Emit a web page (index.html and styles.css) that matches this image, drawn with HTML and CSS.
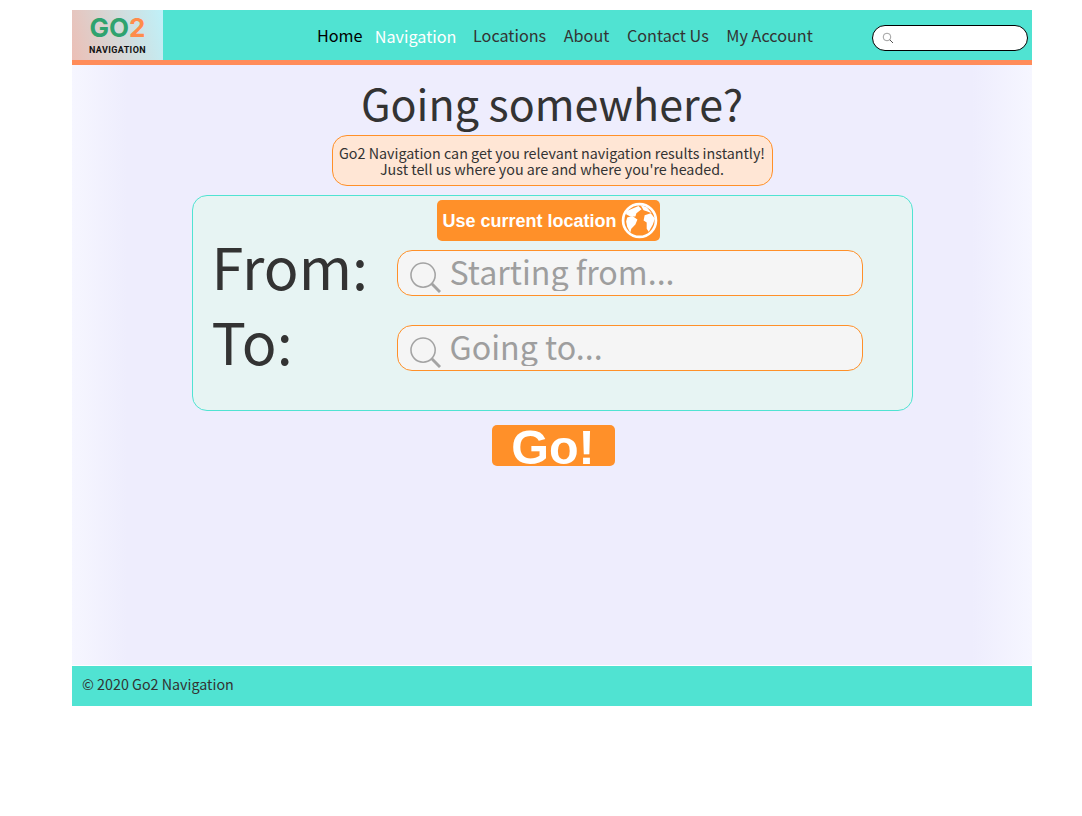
FILE: index.html

```html
<!DOCTYPE html>
<html lang="en">
    <head>
        <meta charset="UTF-8" />
        <title>Go2 Navigation</title>
        <link rel="stylesheet" href="styles.css">
    </head>
    <body>
        <div class="page">
            <header class="top">
                <div class="logo">
                    <div class="logo-name">GO<span class="logo-two">2</span></div>
                    <div class="logo-sub">NAVIGATION</div>
                </div>
                <nav class="menu">
                    <a class="home" href="#">Home</a>
                    <a class="current" href="#">Navigation</a>
                    <a href="#">Locations</a>
                    <a href="#">About</a>
                    <a href="#">Contact Us</a>
                    <a href="#">My Account</a>
                </nav>
                <div class="search">
                    <svg class="search-icon" viewBox="0 0 12 12" width="12" height="12">
                        <circle cx="5" cy="5" r="3.8" fill="none" stroke="#777" stroke-width="0.7" />
                        <path d="M7.8 7.8 L11 11" stroke="#555" stroke-width="1" fill="none" />
                    </svg>
                    <input type="text" />
                </div>
            </header>

            <main class="content">
                <h1>Going somewhere?</h1>
                <p class="intro">Go2 Navigation can get you relevant navigation results instantly!<br>Just tell us where you are and where you're headed.</p>

                <form class="route">
                    <button type="button" class="locate">
                        Use current location
                        <svg class="globe" viewBox="0 0 36 36" width="37" height="37">
                            <circle cx="18" cy="18" r="16" fill="none" stroke="#fff" stroke-width="2.6" />
                            <path fill="#fff" d="M5 9 L17 4 L20 7 L15 11 L14 14 L9 14 L5 12 Z" />
                            <path fill="#fff" d="M6 15 L11 13.5 L16 17 L14 22 L10 26 L9 30 L6 24 L5 19 Z" />
                            <path fill="#fff" d="M19 3 L25 5 L30 11 L25 9 L22 8 Z" />
                            <path fill="#fff" d="M23 13 L29 11 L33 16 L31 22 L27 29 L25 26 L25 20 L22 18 Z" />
                        </svg>
                    </button>
                    <div class="row">
                        <label class="row-label">From:</label>
                        <div class="field">
                            <svg class="field-icon" viewBox="0 0 32 32" width="31" height="31">
                                <circle cx="13.5" cy="13.5" r="12.5" fill="none" stroke="#a3a3a3" stroke-width="1.6" />
                                <path d="M22.5 22.5 L31 31" stroke="#a3a3a3" stroke-width="3" fill="none" />
                            </svg>
                            <input type="text" placeholder="Starting from..." />
                        </div>
                    </div>
                    <div class="row">
                        <label class="row-label">To:</label>
                        <div class="field">
                            <svg class="field-icon" viewBox="0 0 32 32" width="31" height="31">
                                <circle cx="13.5" cy="13.5" r="12.5" fill="none" stroke="#a3a3a3" stroke-width="1.6" />
                                <path d="M22.5 22.5 L31 31" stroke="#a3a3a3" stroke-width="3" fill="none" />
                            </svg>
                            <input type="text" placeholder="Going to..." />
                        </div>
                    </div>
                </form>

                <button type="button" class="go">Go!</button>
            </main>

            <footer class="bottom">© 2020 Go2 Navigation</footer>
        </div>
    </body>
</html>
```

FILE: styles.css

```css
body {
    margin: 0;
    background: #fff;
    font-family: "Noto Sans CJK SC", "Noto Sans", sans-serif;
    color: #333;
}

.page {
    width: 960px;
    margin: 10px 0 0 72px;
}

/* header */
.top {
    display: flex;
    align-items: center;
    height: 50px;
    background: #50e3d2;
    border-bottom: 5px solid #ff8c5a;
}

.logo {
    flex: none;
    width: 91px;
    height: 50px;
    background: linear-gradient(75deg, #ecbfb6, #bff1f9);
    text-align: center;
}

.logo-name {
    font-family: Inter, sans-serif;
    font-weight: 700;
    font-size: 26px;
    line-height: 26px;
    margin-top: 5px;
    color: #2fa36f;
}

.logo-two {
    color: #ff8c4a;
}

.logo-sub {
    font-family: Roboto, sans-serif;
    font-weight: 700;
    font-size: 9px;
    line-height: 10px;
    letter-spacing: 0.4px;
    margin-top: 4px;
    color: #111;
}

.menu {
    display: flex;
    margin-left: 154px;
    font-size: 16.2px;
    line-height: 24px;
    white-space: nowrap;
}

.menu a {
    margin-right: 17.6px;
    color: #333;
    text-decoration: none;
}

.menu .home {
    margin-right: 12.2px;
    color: #000;
}

.menu .current {
    position: relative;
    top: 1px;
    margin-right: 16.6px;
    color: #fff;
}

.search {
    display: flex;
    flex: none;
    align-items: center;
    box-sizing: border-box;
    width: 156px;
    height: 26px;
    margin-top: 6px;
    margin-left: auto;
    margin-right: 4px;
    padding-left: 9px;
    background: #fff;
    border: 1px solid #000;
    border-radius: 13px;
}

.search input {
    width: 120px;
    border: 0;
    background: none;
}

/* main part */
.content {
    display: flex;
    flex-direction: column;
    align-items: center;
    height: 600px;
    margin-bottom: 1px;
    background: linear-gradient(to right, #f6f6ff, #eeedfd 55px, #eeedfd 900px, #f6f6ff);
}

h1 {
    margin: 7px 0 2px;
    font-size: 43px;
    font-weight: 400;
    line-height: 61px;
    color: #333;
}

.intro {
    box-sizing: border-box;
    width: 441px;
    height: 51px;
    margin: 0;
    padding-top: 9px;
    background: #ffe6d5;
    border: 1px solid #ff9029;
    border-radius: 15px;
    font-size: 14.3px;
    line-height: 16px;
    text-align: center;
}

.route {
    box-sizing: border-box;
    width: 721px;
    height: 216px;
    margin-top: 9px;
    padding: 4px 20px 0;
    background: #e7f4f3;
    border: 1px solid #50e3d2;
    border-radius: 15px;
}

.locate {
    display: flex;
    align-items: center;
    gap: 4px;
    height: 41px;
    margin-left: 224px;
    padding: 2px 2px 0 6px;
    background: #ff9029;
    border: 0;
    border-radius: 5px;
    font-family: "Liberation Sans", sans-serif;
    font-size: 18px;
    font-weight: 700;
    color: #fff;
}

.globe {
    margin-top: -2px;
}

.row {
    display: flex;
    height: 75px;
    margin-top: 9px;
}

.row + .row {
    margin-top: 0;
}

.row-label {
    width: 184px;
    margin-left: -1px;
    margin-right: 1px;
    font-size: 57.6px;
    line-height: 30px;
    color: #333;
}

.field {
    display: flex;
    align-items: center;
    gap: 9px;
    box-sizing: border-box;
    width: 466px;
    height: 46px;
    padding: 0 0 0 12px;
    background: #f5f5f5;
    border: 1px solid #ff9029;
    border-radius: 15px;
}

.field-icon {
    flex: none;
    margin-top: 8px;
}

.field input {
    flex: 1;
    min-width: 0;
    border: 0;
    outline: 0;
    padding: 0;
    margin-bottom: 4px;
    background: none;
    font-family: "Noto Sans CJK SC", "Noto Sans", sans-serif;
    font-size: 32.2px;
    line-height: 40px;
    height: 40px;
}

.field input::placeholder {
    color: #9e9e9e;
    opacity: 1;
}

.go {
    width: 123px;
    height: 41px;
    margin-top: 14px;
    margin-left: 2px;
    padding: 2px 0 0;
    background: #ff9029;
    border: 0;
    border-radius: 5px;
    font-family: "Liberation Sans", sans-serif;
    font-size: 48.5px;
    font-weight: 700;
    line-height: 41px;
    color: #fff;
}

/* footer */
.bottom {
    height: 40px;
    padding-left: 10px;
    background: #50e3d2;
    font-size: 14.3px;
    line-height: 36px;
}
```
